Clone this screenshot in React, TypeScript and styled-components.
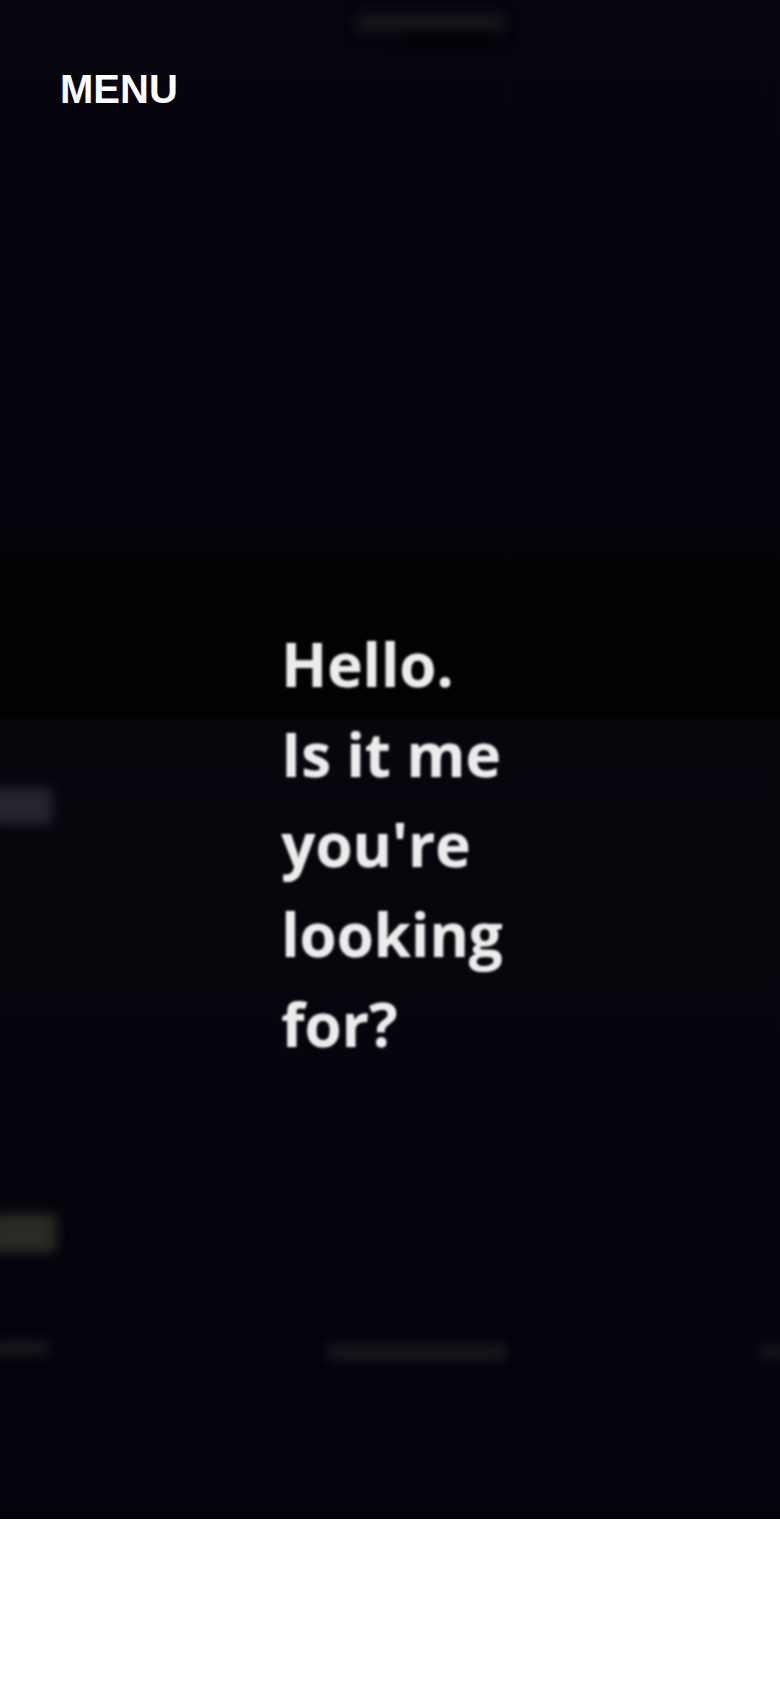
import React, { FC } from "react";
import styled, { createGlobalStyle } from "styled-components";

const GlobalStyle = createGlobalStyle`
  html, body {
    margin: 0;
    padding: 0;
    background: #ffffff;
  }
  * {
    box-sizing: border-box;
  }
`;

interface IGlowProps {
  left: number;
  top: number;
  w: number;
  h: number;
  color?: string;
}

const Hero = styled.section`
  position: relative;
  overflow: hidden;
  height: 90vh;
  display: flex;
  flex-direction: column;
  background: linear-gradient(
    180deg,
    #06050d 0%,
    #05040c 34%,
    #030305 38%,
    #020203 47.2%,
    #07060d 47.5%,
    #05040c 80%,
    #04030b 100%
  );
`;

const Header = styled.header`
  position: relative;
  z-index: 2;
  padding: 69px 0 0 60px;
`;

const MenuButton = styled.button`
  border: 0;
  padding: 0;
  background: none;
  color: #ffffff;
  font-family: "Liberation Sans", Arial, sans-serif;
  font-weight: 700;
  font-size: 40px;
  line-height: 1;
  cursor: pointer;
`;

const Content = styled.div`
  position: relative;
  z-index: 2;
  display: flex;
  justify-content: center;
  padding: 510px 0 0 4px;
`;

const Lines = styled.h1`
  margin: 0;
  color: #ececec;
  font-family: "Open Sans", "Noto Sans", sans-serif;
  font-weight: 700;
  font-size: 60px;
  line-height: 90px;
  filter: blur(1.2px);
  text-shadow: 0 0 3px rgba(255, 255, 255, 0.25);
`;

const Line = styled.span`
  display: block;
`;

// faint smeared shapes from the blurred video frame behind the text
const Glow = styled.span<IGlowProps>`
  position: absolute;
  left: ${({ left }) => left}px;
  top: ${({ top }) => top}px;
  width: ${({ w }) => w}px;
  height: ${({ h }) => h}px;
  background: ${({ color }) => color || "#1b1a20"};
  filter: blur(6px);
  z-index: 1;
`;

const Footer = styled.div`
  height: 10vh;
  background: #ffffff;
`;

const glows: IGlowProps[] = [
  { left: 358, top: 14, w: 146, h: 18, color: "#17161c" },
  { left: 400, top: 34, w: 100, h: 8, color: "#010102" },
  { left: -10, top: 788, w: 62, h: 36, color: "#26252f" },
  { left: -10, top: 1214, w: 66, h: 38, color: "#2a2b27" },
  { left: -10, top: 1342, w: 58, h: 12, color: "#1a1a1e" },
  { left: 328, top: 1345, w: 178, h: 14, color: "#1b1a20" },
  { left: 760, top: 1347, w: 30, h: 10, color: "#1a1a1f" },
];

const lines = ["Hello.", "Is it me", "you're", "looking", "for?"];

const App: FC = () => {
  return (
    <>
      <GlobalStyle />
      <Hero>
        {glows.map((g, i) => (
          <Glow key={i} {...g} />
        ))}
        <Header>
          <MenuButton>MENU</MenuButton>
        </Header>
        <Content>
          <Lines>
            {lines.map((line) => (
              <Line key={line}>{line}</Line>
            ))}
          </Lines>
        </Content>
      </Hero>
      <Footer />
    </>
  );
};

export default App;
